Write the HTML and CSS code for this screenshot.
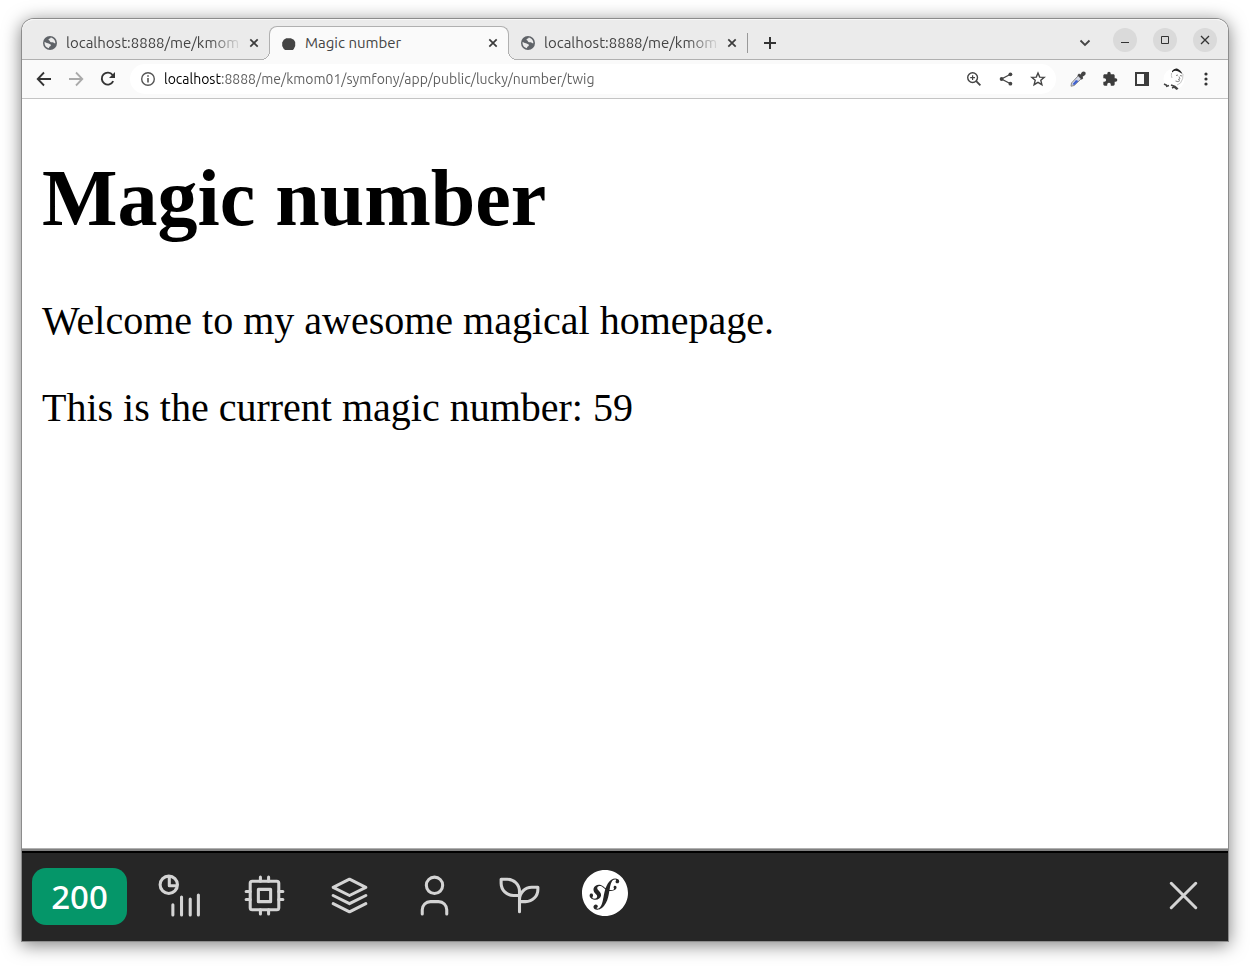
FILE: index.html
```html
<!DOCTYPE html>
<html lang="en">
<head>
<meta charset="utf-8">
<title>Magic number</title>
<link rel="stylesheet" href="styles.css">
</head>
<body>
<svg class="sprite" aria-hidden="true">
  <symbol id="globe" viewBox="0 0 14 14">
    <circle cx="7" cy="7" r="7" fill="#5f6368"/>
    <path d="M1.6 6.1C2.6 6.3 3.6 7.2 4.9 7.2C6 7.2 6.3 8 7.3 8.3C8.2 8.7 8 10.2 6.9 10.4C6 10.6 6.2 11.6 5.9 12.3C3.3 11.8 1.5 9.6 1.5 7Z" fill="#ebebeb"/>
    <path d="M7.7 1.6C7.7 2.8 5.8 2.6 5.5 3.6C5.3 4.6 6.5 4.3 6.9 5.2C7.4 6.3 8.7 6.3 9.6 6.3C10.7 6.4 11 7.5 12.4 7.3C12.5 4.5 10.4 2 7.7 1.6Z" fill="#ebebeb"/>
  </symbol>
  <symbol id="cross" viewBox="0 0 10 10">
    <path d="M1.3 1.3L8.7 8.7M8.7 1.3L1.3 8.7" fill="none" stroke="#3c3c3c" stroke-width="1.7"/>
  </symbol>
</svg>

<div class="window">
  <header class="tabstrip">
    <div class="tab">
      <svg class="favicon"><use href="#globe"/></svg>
      <span class="tab-title faded">localhost:8888/me/kmom</span>
      <button class="tab-close" aria-label="Close tab"><svg width="10" height="10"><use href="#cross"/></svg></button>
    </div>
    <div class="tab active">
      <svg class="favicon" viewBox="0 0 14 14"><path d="M4.2 2.2H8.8L11.8 3.7L13.2 6V10L11.8 13L10.8 14H3.2L1.8 13L0.2 10V6.500L1.800 3.700Z" fill="#444"/></svg>
      <span class="tab-title">Magic number</span>
      <button class="tab-close" aria-label="Close tab"><svg width="10" height="10"><use href="#cross"/></svg></button>
    </div>
    <div class="tab">
      <svg class="favicon"><use href="#globe"/></svg>
      <span class="tab-title faded">localhost:8888/me/kmom</span>
      <button class="tab-close" aria-label="Close tab"><svg width="10" height="10"><use href="#cross"/></svg></button>
    </div>
    <span class="tab-separator"></span>
    <button class="new-tab" aria-label="New tab"><svg width="12" height="12" viewBox="0 0 12 12"><path d="M6 0V12M0 6H12" stroke="#333" stroke-width="2"/></svg></button>
    <div class="window-controls">
      <button class="tab-search" aria-label="Search tabs"><svg width="12" height="8" viewBox="0 0 12 8"><path d="M1.5 1.5L6 6L10.5 1.5" fill="none" stroke="#444" stroke-width="1.8"/></svg></button>
      <button class="round" aria-label="Minimize"><svg width="10" height="10" viewBox="0 0 10 10"><path d="M1 7.5H9" stroke="#333"/></svg></button>
      <button class="round" aria-label="Maximize"><svg width="10" height="10" viewBox="0 0 10 10"><path d="M1.5 1.5H8.5V8.5H1.5Z" fill="none" stroke="#333"/></svg></button>
      <button class="round" aria-label="Close window"><svg width="10" height="10" viewBox="0 0 10 10"><path d="M1 1L9 9M9 1L1 9" stroke="#333" stroke-width="1.3"/></svg></button>
    </div>
  </header>

  <nav class="toolbar">
    <button class="tool" aria-label="Back"><svg width="16" height="16" viewBox="0 0 16 16"><path d="M15 8H2M8 1.5L1.7 8L8 14.5" fill="none" stroke="#333" stroke-width="1.8"/></svg></button>
    <button class="tool" aria-label="Forward"><svg width="16" height="16" viewBox="0 0 16 16"><path d="M1 8H14M8 1.5L14.3 8L8 14.5" fill="none" stroke="#aaa" stroke-width="1.8"/></svg></button>
    <button class="tool" aria-label="Reload"><svg width="16" height="16" viewBox="0 0 16 16"><path d="M13.2 10.2A6 6 0 1 1 12.6 4" fill="none" stroke="#333" stroke-width="1.9"/><path d="M15 1V7H9Z" fill="#333"/></svg></button>
    <div class="address">
      <button class="tool" aria-label="Site information"><svg width="16" height="16" viewBox="0 0 16 16"><circle cx="8" cy="8" r="6.3" fill="none" stroke="#555" stroke-width="1.4"/><path d="M8 7V11.5M8 4.2V5.8" stroke="#555" stroke-width="1.6"/></svg></button>
      <input class="url" aria-label="Address" type="text" value="localhost:8888/me/kmom01/symfony/app/public/lucky/number/twig">
      <button class="tool" aria-label="Zoom"><svg width="16" height="16" viewBox="0 0 16 16"><circle cx="6.6" cy="6.6" r="4.9" fill="none" stroke="#444" stroke-width="1.4"/><path d="M6.6 4.2V9M4.2 6.6H9" stroke="#444" stroke-width="1.2"/><path d="M10.2 10.2L14.4 14.4" stroke="#444" stroke-width="1.8"/></svg></button>
      <button class="tool" aria-label="Share"><svg width="16" height="16" viewBox="0 0 16 16"><path d="M12.5 3.2L3.5 8L12.5 12.8" fill="none" stroke="#444" stroke-width="1.3"/><g fill="#444"><circle cx="12.4" cy="3.3" r="1.9"/><circle cx="3.6" cy="8" r="1.9"/><circle cx="12.4" cy="12.7" r="1.9"/></g></svg></button>
      <button class="tool" aria-label="Bookmark"><svg width="16" height="16" viewBox="0 0 16 16"><path d="M8 2L9.7 6.1L14.2 6.4L10.8 9.3L11.9 13.7L8 11.3L4.1 13.7L5.2 9.3L1.8 6.4L6.3 6.1Z" fill="none" stroke="#444" stroke-width="1.4"/></svg></button>
    </div>
    <button class="tool" aria-label="Color picker"><svg width="16" height="16" viewBox="0 0 16 16"><path d="M8.500 4.500L11.500 7.500L4.200 14.500L1 15.200L1.500 12Z" fill="#d4d8e6" stroke="#888"/><path d="M6 9L8.500 10L4.500 14L2.400 13.200Z" fill="#3d5fd0"/><path d="M7.300 4.200L9 2.600L10.400 3.400L12 1.100Q13.600 -.2 15.200 1Q16.300 2.800 14.800 4.300L12.600 5.700L13.200 7.300L11.700 8.800Z" fill="#444"/></svg></button>
    <button class="tool" aria-label="Extensions"><svg width="16" height="16" viewBox="0 0 24 24"><path d="M20.5 11H19V7c0-1.100-.9-2-2-2h-4V3.500a2.500 2.500 0 0 0-5 0V5H4c-1.100 0-2 .9-2 2v3.800h1.500a2.700 2.700 0 0 1 0 5.400H2V20c0 1.100.9 2 2 2h3.800v-1.500a2.700 2.700 0 0 1 5.400 0V22H17c1.100 0 2-.9 2-2v-4h1.500a2.500 2.500 0 0 0 0-5z" fill="#3c3c3c"/></svg></button>
    <button class="tool" aria-label="Side panel"><svg width="14" height="14" viewBox="0 0 14 14"><path d="M0 0H14V14H0ZM2 2V12H9V2Z" fill="#3c3c3c" fill-rule="evenodd"/></svg></button>
    <button class="tool" aria-label="Profile"><svg width="22" height="24" viewBox="0 0 22 24"><circle cx="11" cy="12" r="10.500" fill="#fff"/><path d="M9 4Q11 1 14 1.500Q18 3 19.500 7L17 5.500Q14 3 11 4L9 5.500Z" fill="#222"/><path d="M8.500 6Q8 9 9 11M20 7Q20.500 12 17.500 16L14 18" fill="none" stroke="#c4c4c4"/><path d="M13 8.500L15 8M17 8.500L19 9M16 9.500L17 12L15 12.500M12.500 14Q15 15.500 17 13.500" fill="none" stroke="#888"/><path d="M1 17L4 18.500M3 19.500L6 18.500M8 18L12 19.500L15 22M9 21L11 20L14 22.500" fill="none" stroke="#444" stroke-width="1.500"/></svg></button>
    <button class="tool" aria-label="Menu"><svg width="4" height="14" viewBox="0 0 4 14"><g fill="#333"><circle cx="2" cy="2" r="1.600"/><circle cx="2" cy="7" r="1.600"/><circle cx="2" cy="12" r="1.600"/></g></svg></button>
  </nav>

  <main class="page">
    <h1>Magic number</h1>
    <p>Welcome to my awesome magical homepage.</p>
    <p>This is the current magic number: 59</p>
  </main>

  <footer class="debugbar">
    <a class="status" href="#">200</a>
    <a class="panel" href="#" aria-label="Performance"><svg viewBox="0 0 48 48"><g stroke-width="3"><circle cx="13.500" cy="13.500" r="8.500"/><path d="M14 6V14.500H21M17.500 33V43M26 25.500V43M34.500 27.500V43M42.500 23.500V43"/></g></svg></a>
    <a class="panel" href="#" aria-label="Memory"><svg viewBox="0 0 24 24"><rect x="5" y="5" width="14" height="14" rx="1"/><path d="M9 9H15V15H9ZM3 10H5M3 14H5M10 3V5M14 3V5M21 10H19M21 14H19M14 21V19M10 21V19"/></svg></a>
    <a class="panel" href="#" aria-label="Cache"><svg viewBox="0 0 24 24"><path d="M12 4L4 8L12 12L20 8ZM4 12L12 16L20 12M4 16L12 20L20 16"/></svg></a>
    <a class="panel" href="#" aria-label="Security"><svg viewBox="0 0 24 24"><circle cx="12" cy="7" r="4"/><path d="M6 21V19A4 4 0 0 1 10 15H14A4 4 0 0 1 18 19V21"/></svg></a>
    <a class="panel" href="#" aria-label="Twig"><svg viewBox="0 0 24 24"><path d="M12 10A6 6 0 0 0 6 4H3V6A6 6 0 0 0 9 12H12M12 14A6 6 0 0 1 18 8H21V9A6 6 0 0 1 15 15H12M12 20V10"/></svg></a>
    <a class="panel brand" href="#" aria-label="Symfony"><svg viewBox="0 0 24 24"><circle cx="12" cy="12" r="11" fill="#262626"/><path d="M24 12c0 6.628-5.372 12-12 12S0 18.628 0 12 5.372 0 12 0s12 5.372 12 12zm-6.753-7.561c-1.220.042-2.283.715-3.075 1.644-.878 1.020-1.461 2.229-1.881 3.461-.753-.614-1.332-1.414-2.539-1.761-.934-.268-1.915-.158-2.816.514-.427.319-.722.8-.862 1.255-.362 1.181.384 2.236.722 2.612l.742.793c.153.156.521.564.341 1.146-.195.632-.957 1.041-1.737.799-.348-.106-.848-.366-.737-.730.045-.150.152-.263.210-.391.052-.112.077-.194.095-.242.141-.465-.053-1.068-.551-1.223-.465-.143-.939-.030-1.125.566-.209.680.117 1.913 1.860 2.449 2.040.628 3.769-.484 4.014-1.931.154-.907-.256-1.581-1.006-2.447l-.612-.677c-.371-.370-.497-1.002-.114-1.485.324-.409.785-.583 1.538-.379 1.101.3 1.591 1.063 2.409 1.680-.338 1.110-.559 2.222-.760 3.222l-.123.746c-.585 3.070-1.033 4.757-2.194 5.725-.234.166-.570.416-1.073.434-.266.005-.352-.176-.355-.257-.006-.184.150-.270.255-.353.154-.083.390-.224.372-.674-.016-.532-.456-.994-1.094-.973-.477.017-1.203.465-1.176 1.286.027.850.819 1.485 2.012 1.444.639-.021 2.062-.281 3.464-1.949 1.633-1.911 2.090-4.101 2.434-5.706l.383-2.117c.213.024.441.042.690.048 2.032.044 3.049-1.010 3.064-1.776.010-.464-.304-.921-.744-.910-.386.009-.718.278-.806.654-.094.428.646.813.068 1.189-.410.266-1.146.452-2.184.3l.188-1.042c.386-1.976.859-4.407 2.661-4.467.132-.007.612.006.623.323.003.105-.022.134-.147.375-.115.155-.174.345-.168.537.017.504.4.836.957.816.743-.023.955-.748.945-1.119-.032-.874-.952-1.424-2.170-1.386z" fill="#fff"/></svg></a>
    <button class="hide-bar" aria-label="Close toolbar"><svg viewBox="0 0 24 24"><path d="M18 6L6 18M6 6L18 18"/></svg></button>
  </footer>
</div>
</body>
</html>
```

FILE: styles.css
```css
* {
  box-sizing: border-box;
}

body {
  margin: 0;
  min-height: 100vh;
  padding: 19px 22px 25px;
  display: flex;
  background: #fff;
}

button {
  border: 0;
  padding: 0;
  background: none;
  display: flex;
  align-items: center;
  justify-content: center;
}

.sprite {
  display: none;
}

.window {
  flex: 1;
  min-width: 0;
  display: flex;
  flex-direction: column;
  border-radius: 12px 12px 0 0;
  background: #fff;
  box-shadow: 0 0 0 1px #8c8c8c, 0 3px 18px 1px rgba(0, 0, 0, 0.5);
}

.tabstrip {
  height: 41px;
  padding: 7px 11px 0 8px;
  display: flex;
  background: #ebebeb;
  border-radius: 12px 12px 0 0;
  border-bottom: 1px solid #b0b0b0;
  box-shadow: inset 0 1px #f8f8f8;
  font-family: Ubuntu, "Noto Sans", sans-serif;
  font-size: 15px;
  color: #444;
}

.tab {
  position: relative;
  width: 239px;
  height: 34px;
  padding: 0 9px 0 13px;
  display: flex;
  align-items: center;
}

.tab.active {
  width: 240px;
  margin-right: -1px;
  padding-left: 12px;
  padding-bottom: 1px;
  background: #fafafa;
  border: 1px solid #b0b0b0;
  border-bottom: 0;
  border-radius: 8px 8px 0 0;
}

.tab.active::before,
.tab.active::after {
  content: "";
  position: absolute;
  bottom: 0;
  width: 9px;
  height: 9px;
}

.tab.active::before {
  left: -9px;
  background: radial-gradient(circle at 0 0, #ebebeb 8px, #b0b0b0 8px, #b0b0b0 9px, #fafafa 9px);
}

.tab.active::after {
  right: -9px;
  background: radial-gradient(circle at 100% 0, #ebebeb 8px, #b0b0b0 8px, #b0b0b0 9px, #fafafa 9px);
}

.favicon {
  width: 14px;
  height: 14px;
  flex: none;
}

.tab-title {
  flex: 1;
  margin: 0 5px 0 9px;
  white-space: nowrap;
  line-height: 20px;
}

.tab-title.faded {
  mask-image: linear-gradient(to left, transparent, #000 34px);
}

.tab-close {
  width: 12px;
  height: 16px;
}

.tab-separator {
  width: 1px;
  height: 20px;
  margin-top: 7px;
  background: #999;
}

.new-tab {
  width: 28px;
  height: 34px;
  margin-left: 8px;
}

.window-controls {
  margin-left: auto;
  height: 28px;
  display: flex;
  align-items: center;
  gap: 16px;
}

.tab-search {
  width: 24px;
  height: 34px;
  margin-top: 6px;
}

.round {
  width: 24px;
  height: 24px;
  border-radius: 50%;
  background: #dadada;
}

.toolbar {
  height: 39px;
  padding: 0 6px;
  display: flex;
  align-items: center;
  background: #fafafa;
  border-bottom: 1px solid #c4c4c4;
}

.tool {
  width: 32px;
  height: 30px;
  flex: none;
}

.address {
  flex: 1;
  min-width: 0;
  margin: 0 6px;
  padding: 0 2px;
  display: flex;
  align-items: center;
  background: #fff;
  border-radius: 15px;
}

.url {
  flex: 1;
  min-width: 0;
  border: 0;
  padding: 0;
  font: 14px/20px Ubuntu, "Noto Sans", sans-serif;
  color: transparent;
  background: linear-gradient(to right, #000 58px, #5c5c5c 58px);
  background-clip: text;
}

.page {
  flex: 1;
  padding: 0 20px;
  font-family: "Liberation Serif", serif;
  color: #000;
}

.page h1 {
  margin: 53px 0 54px;
  font-size: 80px;
  line-height: 92px;
}

.page p {
  margin: 0 0 41px;
  font-size: 40px;
  line-height: 46px;
}

.debugbar {
  padding: 15px 20px 16px 10px;
  display: flex;
  align-items: center;
  background: #262626;
  border-top: 2px solid #000;
  box-shadow: 0 -2px #808080, 0 -3px #b0b0b0;
}

.status {
  min-width: 95px;
  margin-right: 10px;
  padding: 0 19px;
  border-radius: 14px;
  background: #059669;
  color: #fff;
  font: 500 33px/57px "Noto Sans", sans-serif;
  text-align: center;
  text-decoration: none;
}

.panel {
  width: 85px;
  display: flex;
  justify-content: center;
}

.panel svg,
.hide-bar svg {
  width: 49px;
  height: 49px;
  margin-bottom: 2px;
  fill: none;
  stroke: #d4d4d4;
  stroke-width: 1.5;
  stroke-linecap: round;
  stroke-linejoin: round;
}

.panel.brand svg {
  width: 46px;
  height: 46px;
  margin-bottom: 8px;
  stroke: none;
}

.hide-bar {
  margin-left: auto;
}
```
